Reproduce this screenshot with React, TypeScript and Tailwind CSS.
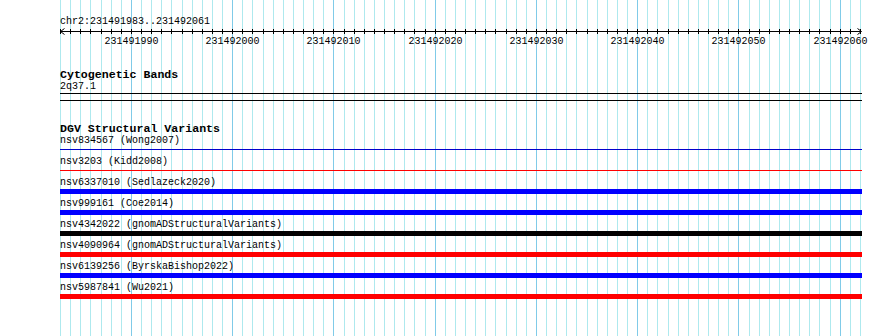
import React from "react";

const START = 231491983;
const END = 231492061;
const LEFT = 60;
const SPAN = 800;
const BASES = END - START + 1;
const px = (i: number) => LEFT + (i * SPAN) / BASES;

const font = { fontFamily: '"Liberation Mono", "DejaVu Sans Mono", monospace' };

type Feature = { name: string; study: string; kind: "thin" | "bar"; color: string };

const variants: Feature[] = [
  { name: "nsv834567", study: "Wong2007", kind: "thin", color: "bg-[#0000cc]" },
  { name: "nsv3203", study: "Kidd2008", kind: "thin", color: "bg-[#ff0000]" },
  { name: "nsv6337010", study: "Sedlazeck2020", kind: "bar", color: "bg-[#0000ff]" },
  { name: "nsv999161", study: "Coe2014", kind: "bar", color: "bg-[#0000ff]" },
  { name: "nsv4342022", study: "gnomADStructuralVariants", kind: "bar", color: "bg-black" },
  { name: "nsv4090964", study: "gnomADStructuralVariants", kind: "bar", color: "bg-[#ff0000]" },
  { name: "nsv6139256", study: "ByrskaBishop2022", kind: "bar", color: "bg-[#0000ff]" },
  { name: "nsv5987841", study: "Wu2021", kind: "bar", color: "bg-[#ff0000]" },
];

function Grid() {
  const lines = [];
  for (let i = 0; i <= BASES; i++) {
    const major = (START + i) % 10 === 0;
    lines.push(
      <rect
        key={i}
        x={Math.round(px(i))}
        y={0}
        width={1}
        height={336}
        fill={major ? "#80cbe8" : "#aee9ee"}
      />
    );
  }
  return (
    <svg className="absolute inset-0" width={890} height={336}>
      {lines}
    </svg>
  );
}

function Ruler() {
  const ticks = [];
  const labels = [];
  for (let i = 0; i <= BASES; i++) {
    const x = Math.round(px(i)) + 0.5;
    ticks.push(<line key={i} x1={x} x2={x} y1={1} y2={6} stroke="#000" strokeWidth={1} />);
    const pos = START + i;
    if (pos % 10 === 0) {
      labels.push(
        <text key={"l" + i} x={x} y={16} textAnchor="middle" fontSize={10} fill="#000" style={font}>
          {pos}
        </text>
      );
    }
  }
  return (
    <svg className="block" width={890} height={20}>
      <line x1={60} x2={861} y1={3.5} y2={3.5} stroke="#000" strokeWidth={1} />
      <polyline points="64.5,0.5 60.5,3.5 64.5,6.5" fill="none" stroke="#000" strokeWidth={1} />
      <polyline points="857.5,0.5 861.5,3.5 857.5,6.5" fill="none" stroke="#000" strokeWidth={1} />
      {ticks}
      {labels}
    </svg>
  );
}

function VariantRow({ f }: { f: Feature }) {
  return (
    <div className="flex flex-col mb-[4px]">
      <div className="h-[12px] leading-[12px] text-[10px] whitespace-pre">
        {f.name} ({f.study})
      </div>
      <div className="h-[5px] w-[802px] flex flex-col">
        {f.kind === "bar" ? (
          <div className={`h-[5px] w-full ${f.color}`} />
        ) : (
          <div className={`mt-[2px] h-[1px] w-full ${f.color}`} />
        )}
      </div>
    </div>
  );
}

export default function App() {
  return (
    <div className="relative w-[890px] h-[336px] bg-white overflow-hidden text-black" style={font}>
      <Grid />
      <div className="relative">
        <div className="pt-[16px] pl-[60px] h-[28px] leading-[12px] text-[10px]">chr2:231491983..231492061</div>
        <Ruler />
        <div className="pl-[60px] pt-[20px]">
          <div className="h-[13px] leading-[13px] text-[11.6px] font-bold">Cytogenetic Bands</div>
          <div className="h-[12px] leading-[12px] text-[10px]">2q37.1</div>
          <div className="h-[8px] w-[802px] border-y border-black" />
          <div className="mt-[21px] h-[13px] leading-[13px] text-[11.6px] font-bold">DGV Structural Variants</div>
          {variants.map((f) => (
            <VariantRow key={f.name} f={f} />
          ))}
        </div>
      </div>
    </div>
  );
}
